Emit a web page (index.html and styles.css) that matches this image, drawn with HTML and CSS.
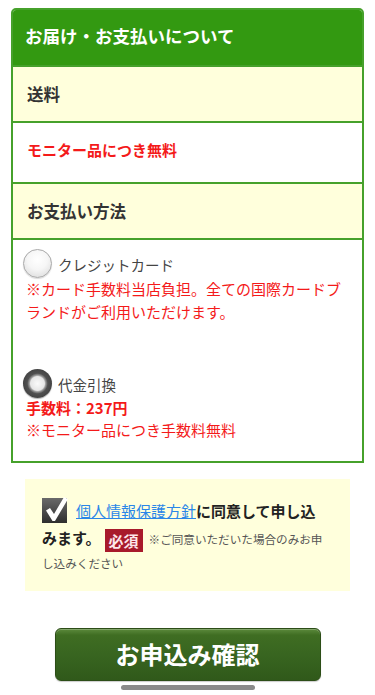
FILE: index.html
```html
<!DOCTYPE html>
<html lang="ja">
<head>
<meta charset="utf-8">
<meta name="viewport" content="width=device-width, initial-scale=1">
<title>お届け・お支払いについて</title>
<link rel="stylesheet" href="styles.css">
</head>
<body>
<section class="panel">
  <h2 class="panel-head">お届け・お支払いについて</h2>
  <div class="row row-label">送料</div>
  <div class="row row-value"><span class="red-strong">モニター品につき無料</span></div>
  <div class="row row-label">お支払い方法</div>
  <div class="row-pay">
    <label class="option">
      <span class="radio"></span>
      <span class="option-text">クレジットカード</span>
    </label>
    <p class="note">※カード手数料当店負担。全ての国際カードブランドがご利用いただけます。</p>
    <label class="option option-cod">
      <span class="radio radio-on"></span>
      <span class="option-text">代金引換</span>
    </label>
    <p class="fee">手数料：237円</p>
    <p class="note note-last">※モニター品につき手数料無料</p>
  </div>
</section>

<div class="agree">
  <p class="agree-text"><span class="big"><span class="check"><svg width="26" height="26" viewBox="0 0 26 26"><defs><linearGradient id="cg" x1="0" y1="0" x2="0" y2="1"><stop offset="0" stop-color="#6a6a6a"/><stop offset="1" stop-color="#2e2e2e"/></linearGradient></defs><rect x="0" y="1" width="25" height="25" fill="url(#cg)"/><path d="M4 13.5 L8 11 L12 17 L22 0 L26 2 L13 24 L10.5 24 Z" fill="#fff"/></svg></span><a class="link" href="#">個人情報保護方針</a>に同意して申し込みます。<span class="badge">必須</span></span><span class="small">※ご同意いただいた場合のみお申し込みください</span></p>
</div>

<div class="actions">
  <button class="submit" type="button">お申込み確認</button>
</div>

<div class="home-indicator"></div>
</body>
</html>
```

FILE: styles.css
```css
* { box-sizing: border-box; }
html, body { margin: 0; padding: 0; }
body {
  background: #fff;
  font-family: "Noto Sans CJK JP", "Noto Sans", sans-serif;
  color: #333;
  width: 375px;
  min-height: 695px;
  position: relative;
  padding-top: 8px;
}
.panel {
  margin: 0 11px;
  border: 2px solid #46a12b;
  border-radius: 5px 5px 0 0;
  overflow: hidden;
}
.panel-head {
  margin: -2px -2px 0;
  height: 57px;
  background: #339911;
  color: #fff;
  font-size: 17.5px;
  font-weight: bold;
  display: flex;
  align-items: center;
  padding: 0 0 2px 14px;
  line-height: 1;
}
.row {
  border-top: 2px solid #46a12b;
  display: flex;
  align-items: center;
  padding-left: 14px;
  font-weight: bold;
}
.row-label {
  background: #ffffdc;
  height: 56px;
  font-size: 16.5px;
  color: #333;
}
.row-value {
  background: #fff;
  height: 61px;
  padding-bottom: 6px;
}
.red-strong {
  color: #f41a1a;
  font-size: 15px;
  font-weight: bold;
}
.row-pay {
  border-top: 2px solid #46a12b;
  background: #fff;
  padding: 9px 13px 21px;
}
.option {
  display: flex;
  align-items: center;
  height: 28px;
  margin-left: -3px;
}
.option-cod { margin-top: 46px; }
.radio {
  width: 29px;
  height: 29px;
  border-radius: 50%;
  flex: none;
  border: 1.5px solid #a8a8a8;
  background: radial-gradient(circle at 50% 35%, #ffffff 0, #f6f6f6 45%, #e2e2e2 80%, #d0d0d0 100%);
  box-shadow: 0 1px 1px rgba(0,0,0,0.15);
}
.radio-on {
  border: none;
  background: radial-gradient(circle at 50% 50%, #fafafa 0, #e6e6e6 34%, #9a9a9a 40%, #505050 50%, #3e3e3e 80%, #555 100%);
  box-shadow: 0 1px 1px rgba(0,0,0,0.3);
}
.option-text {
  margin-left: 6px;
  font-size: 14.5px;
  color: #444;
  padding-top: 2px;
}
.note {
  margin: 0;
  color: #f41a1a;
  font-size: 15px;
  line-height: 23px;
}
.note-last { line-height: 21px; }
.fee {
  margin: 0;
  color: #f41a1a;
  font-size: 15px;
  font-weight: bold;
  line-height: 22px;
}
.agree {
  margin: 16px 25px 0;
  background: #ffffdc;
  padding: 18px 21px 17px 17px;
}
.agree-text {
  margin: 0;
  font-size: 11.6px;
  line-height: 22px;
}
.big {
  font-size: 15px;
  line-height: 27px;
  font-weight: bold;
  color: #222;
}
.check {
  display: inline-block;
  width: 26px;
  height: 26px;
  margin-right: 8px;
  vertical-align: -6px;
}
.check svg { display: block; }
.link {
  color: #2a86e8;
  text-decoration: underline;
  font-weight: normal;
}
.badge {
  display: inline-block;
  background: #a81a2b;
  color: #fde6ea;
  font-size: 15px;
  font-weight: bold;
  line-height: 23px;
  height: 23px;
  padding: 0 4px;
  margin-left: 4px;
  margin-right: 6px;
  vertical-align: -3px;
}
.small {
  font-weight: normal;
  color: #555;
}
.actions {
  display: flex;
  justify-content: center;
  margin-top: 37px;
}
.submit {
  width: 266px;
  height: 53px;
  border: 1px solid #2c4d17;
  border-radius: 6px;
  background: linear-gradient(to bottom, #5c8a3c 0, #3f6d22 12%, #386520 50%, #30591a 100%);
  box-shadow: inset 0 1px 0 rgba(255,255,255,0.25), 0 1px 1px rgba(0,0,0,0.2);
  color: #fff;
  font-family: "Noto Sans CJK JP", "Noto Sans", sans-serif;
  font-size: 24px;
  font-weight: bold;
  padding: 0 0 2px;
  cursor: pointer;
}
.home-indicator {
  position: absolute;
  left: 121px;
  top: 685px;
  width: 134px;
  height: 5px;
  border-radius: 3px;
  background: #8a8a8a;
}
```
